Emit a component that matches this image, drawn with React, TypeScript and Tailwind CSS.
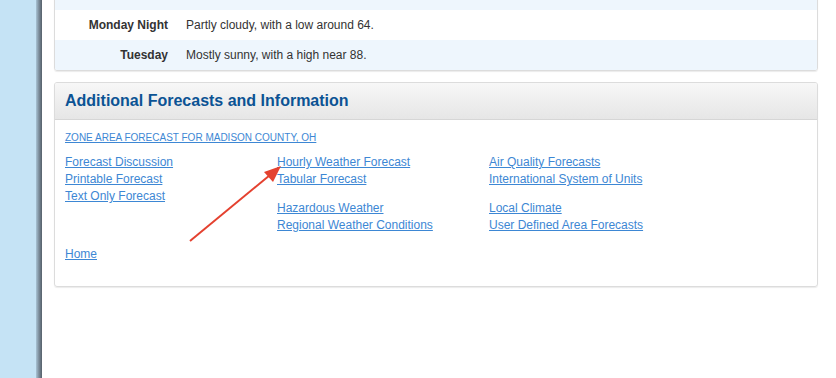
import React from 'react';

const rows = [
  { label: '', text: '', shade: true },
  { label: 'Monday Night', text: 'Partly cloudy, with a low around 64.', shade: false },
  { label: 'Tuesday', text: 'Mostly sunny, with a high near 88.', shade: true },
];

const linkCls = 'text-[#3d87d4] underline underline-offset-1 leading-[17px] block w-fit';

export default function App() {
  return (
    <div className="relative flex h-[378px] w-[836px] overflow-hidden bg-white" style={{ fontFamily: '"Liberation Sans", Arial, sans-serif' }}>
      {/* Sidebar */}
      <div className="flex h-full w-[42px] shrink-0">
        <div className="w-[36px] bg-[#c5e3f5]" />
        <div className="w-[6px] bg-gradient-to-r from-[#a9c4d6] via-[#7b8c9a] to-[#56606a]" />
      </div>

      <div className="ml-[12px] w-[764px] shrink-0">
        {/* Detailed forecast (tail end) */}
        <div className="-mt-[21px] overflow-hidden rounded-[3px] border border-[#dcdcdc] shadow-[0_1px_1px_rgba(0,0,0,0.08)]">
          {rows.map((r, i) => (
            <div key={i} className={`flex h-[30px] items-center text-[12px] text-[#333] ${r.shade ? 'bg-[#eef6fd]' : 'bg-white'}`}>
              <div className="w-[113px] text-right font-bold">{r.label}</div>
              <div className="ml-[18px]">{r.text}</div>
            </div>
          ))}
        </div>

        {/* Additional Forecasts */}
        <div className="mt-[11px] h-[205px] overflow-hidden rounded-[3px] border border-[#dcdcdc] shadow-[0_1px_1px_rgba(0,0,0,0.08)]">
          <div className="flex h-[37px] items-center border-b border-[#d6d6d6] bg-gradient-to-b from-[#f7f7f7] to-[#e6e6e6] px-[10px]">
            <h2 className="text-[16px] font-bold text-[#0b5394]">Additional Forecasts and Information</h2>
          </div>
          <div className="px-[10px] pt-[12px] text-[12px]">
            <a className="text-[#3d87d4] text-[10px] uppercase underline underline-offset-1 leading-[12px] block w-fit">
              Zone Area Forecast for Madison County, OH
            </a>
            <div className="mt-[10px] grid grid-cols-[212px_212px_212px]">
              <div>
                <a className={linkCls}>Forecast Discussion</a>
                <a className={linkCls}>Printable Forecast</a>
                <a className={linkCls}>Text Only Forecast</a>
              </div>
              <div>
                <a className={linkCls}>Hourly Weather Forecast</a>
                <a className={linkCls}>Tabular Forecast</a>
                <div className="h-[12px]" />
                <a className={linkCls}>Hazardous Weather</a>
                <a className={linkCls}>Regional Weather Conditions</a>
              </div>
              <div>
                <a className={linkCls}>Air Quality Forecasts</a>
                <a className={linkCls}>International System of Units</a>
                <div className="h-[12px]" />
                <a className={linkCls}>Local Climate</a>
                <a className={linkCls}>User Defined Area Forecasts</a>
              </div>
            </div>
            <a className={`${linkCls} mt-[12px]`}>Home</a>
          </div>
        </div>
      </div>

      {/* Annotation arrow */}
      <svg className="pointer-events-none absolute left-0 top-0" width="836" height="378">
        <line x1="190" y1="241" x2="270" y2="175" stroke="#e4412f" strokeWidth="2" />
        <polygon points="281,166 264,172 273,182" fill="#e4412f" />
      </svg>
    </div>
  );
}
